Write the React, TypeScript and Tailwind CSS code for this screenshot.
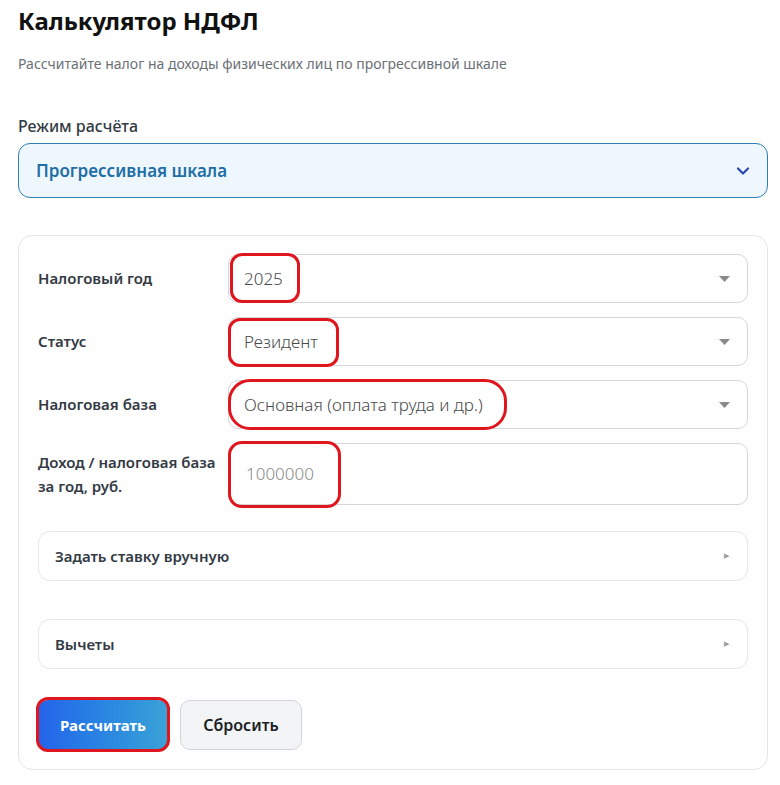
import { ChevronDown } from 'lucide-react';

const RED = 'absolute border-[3px] border-[#e0161e] pointer-events-none';

function Caret() {
  return (
    <svg width="11" height="6" viewBox="0 0 11 6" className="shrink-0">
      <path d="M0 0 L11 0 L5.5 6 Z" fill="#8a8a8a" />
    </svg>
  );
}

interface SelectRowProps {
  label: string;
  value: string;
  mark: string;
}

function SelectRow({ label, value, mark }: SelectRowProps) {
  return (
    <div className="flex items-center">
      <div className="w-[190px] shrink-0 text-[15px] font-semibold text-[#333a44]">{label}</div>
      <div className="relative flex-1">
        <div className="h-[49px] flex items-center justify-between pl-[15px] pr-[17px] border border-[#d4d6da] rounded-[10px] bg-white">
          <span className="text-[17px] font-light text-[#4a4a4a]">{value}</span>
          <Caret />
        </div>
        <span className={`${RED} ${mark}`} />
      </div>
    </div>
  );
}

function Collapsible({ title }: { title: string }) {
  return (
    <div className="h-[50px] flex items-center justify-between pl-[16px] pr-[18px] border border-[#e6e7ea] rounded-[12px] bg-white">
      <span className="text-[15px] font-semibold text-[#333a44]">{title}</span>
      <span className="text-[7px] text-[#9a9a9a]">▶</span>
    </div>
  );
}

export default function App() {
  return (
    <div className="min-h-[785px] bg-white pl-[18px] pr-[12px] font-['Noto_Sans',sans-serif]">
      <h1 className="pt-[5px] text-[24px] leading-[32px] font-bold text-[#111]">Калькулятор НДФЛ</h1>
      <p className="mt-[17px] text-[14px] leading-[20px] text-[#6b6f76]">
        Рассчитайте налог на доходы физических лиц по прогрессивной шкале
      </p>

      <div className="mt-[41px] text-[16px] leading-[22px] font-medium text-[#333a44]">Режим расчёта</div>
      <div className="mt-[6px] h-[55px] flex items-center justify-between pl-[17px] pr-[14px] border border-[#2f7fb5] rounded-[12px] bg-[#eef6fe]">
        <span className="text-[17px] font-semibold text-[#1f6ea5]">Прогрессивная шкала</span>
        <ChevronDown size={20} strokeWidth={2.6} color="#2a45b5" />
      </div>

      <div className="mt-[37px] border border-[#e5e6e9] rounded-[14px] bg-[#fefefe] pt-[18px] pb-[19px] px-[19px]">
        <div className="flex flex-col gap-[14px]">
          <SelectRow label="Налоговый год" value="2025" mark="left-[2px] -top-[1px] w-[70px] h-[50px] rounded-[12px]" />
          <SelectRow label="Статус" value="Резидент" mark="left-0 top-[1px] w-[111px] h-[49px] rounded-[12px]" />
          <SelectRow
            label="Налоговая база"
            value="Основная (оплата труда и др.)"
            mark="left-0 -top-[1px] w-[279px] h-[51px] rounded-[22px]"
          />
          <div className="flex items-center">
            <div className="w-[190px] shrink-0 text-[15px] leading-[24px] font-semibold text-[#333a44] pr-[10px]">
              Доход / налоговая база за год, руб.
            </div>
            <div className="relative flex-1">
              <div className="h-[62px] flex items-center pl-[17px] border border-[#d4d6da] rounded-[10px] bg-white">
                <span className="text-[17px] font-light text-[#8a8a8a]">1000000</span>
              </div>
              <span className={`${RED} left-0 -top-[2px] w-[113px] h-[67px] rounded-[14px]`} />
            </div>
          </div>
        </div>

        <div className="mt-[26px]">
          <Collapsible title="Задать ставку вручную" />
        </div>
        <div className="mt-[38px]">
          <Collapsible title="Вычеты" />
        </div>

        <div className="mt-[31px] flex gap-[12px]">
          <div className="relative">
            <button className="h-[50px] w-[130px] rounded-[10px] bg-gradient-to-r from-[#2563eb] to-[#3aa2d6] text-[15px] font-bold text-white">
              Рассчитать
            </button>
            <span className={`${RED} -left-[2px] -top-[3px] w-[134px] h-[55px] rounded-[12px]`} />
          </div>
          <button className="h-[50px] w-[122px] rounded-[10px] border border-[#d1d5db] bg-[#f3f4f6] text-[16px] font-semibold text-[#1c1f24]">
            Сбросить
          </button>
        </div>
      </div>
    </div>
  );
}
